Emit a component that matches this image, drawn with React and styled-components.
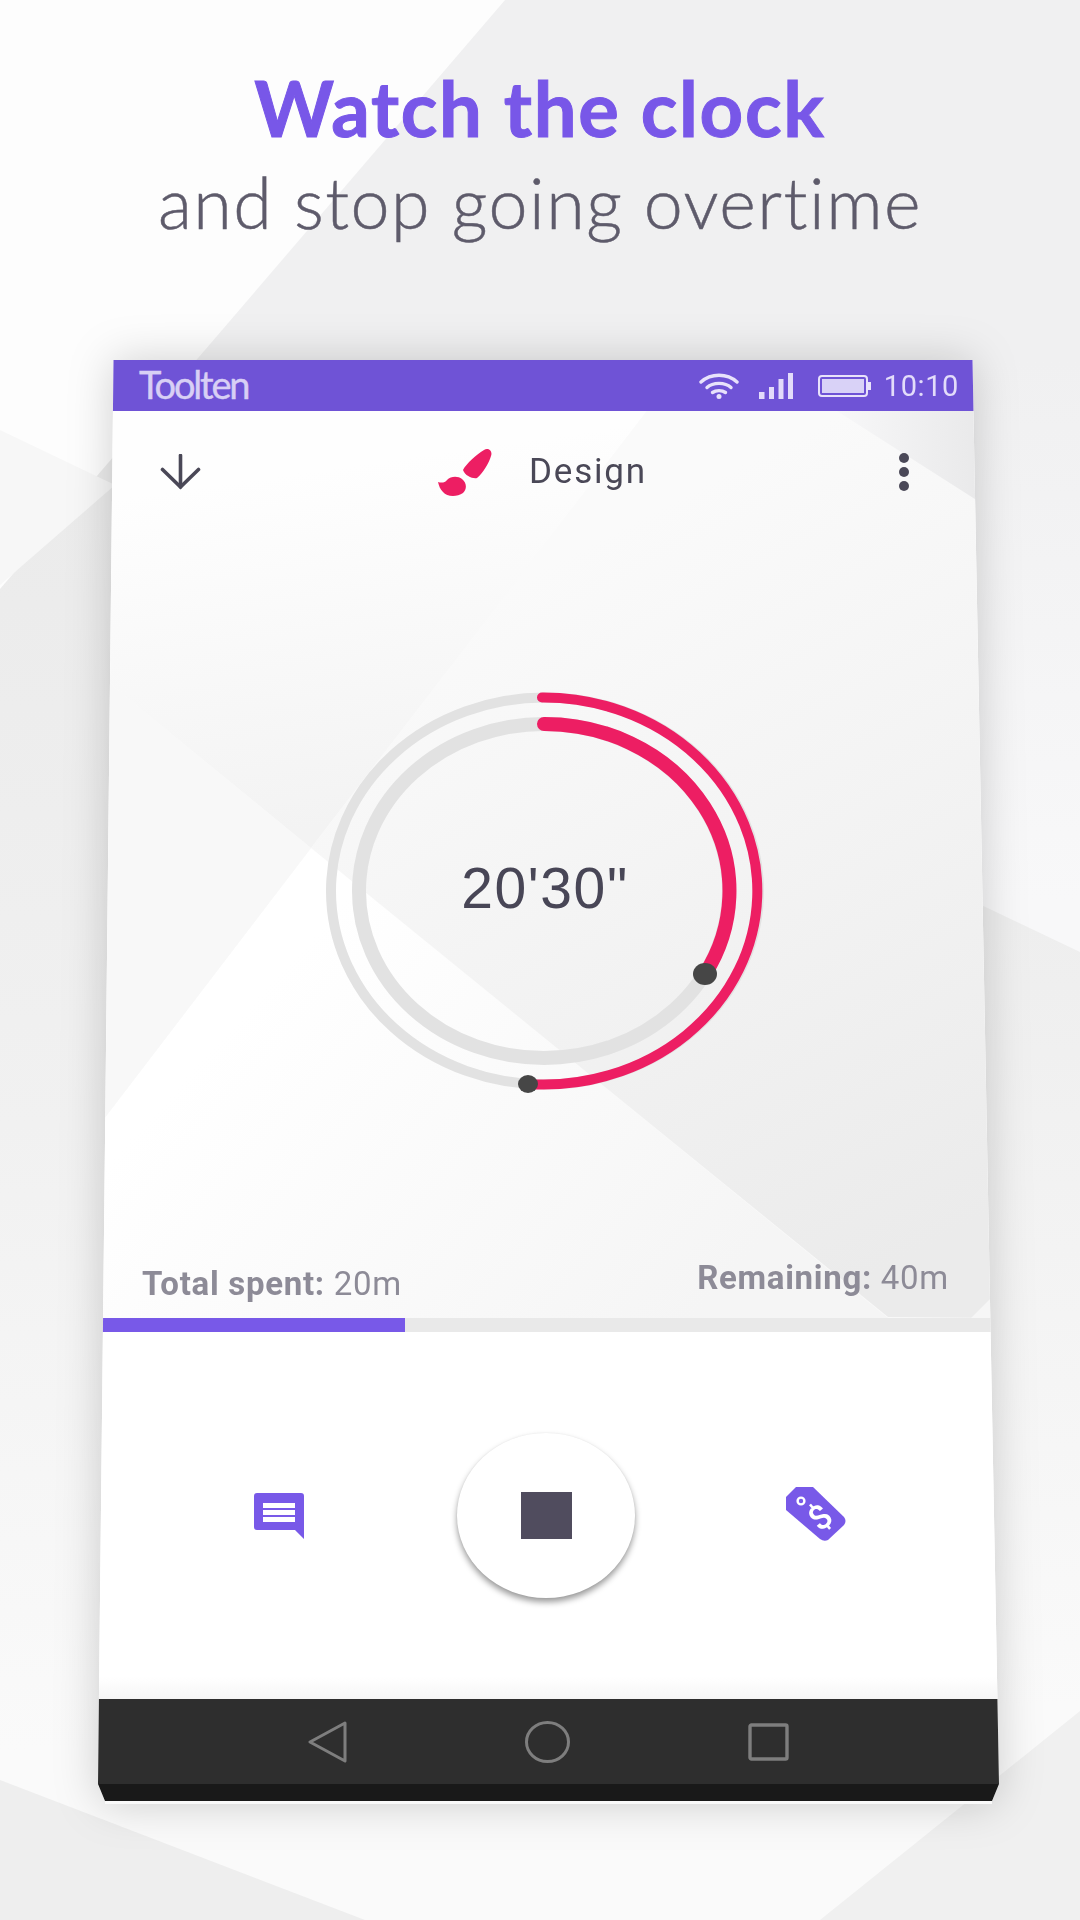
import React from 'react'
import styled, { createGlobalStyle } from 'styled-components'

const GlobalStyle = createGlobalStyle`
  html, body {
    margin: 0;
    padding: 0;
    background: #f0f0f1;
  }
`

const Page = styled.div`
  position: relative;
  width: 1080px;
  height: 1920px;
  overflow: hidden;
  font-family: Roboto, "Liberation Sans", sans-serif;
`
const Backdrop = styled.svg`
  position: absolute;
  top: 0;
  left: 0;
`
const Content = styled.div`
  position: relative;
  display: flex;
  flex-direction: column;
`
const Heading = styled.div`
  height: 360px;
  padding-top: 66px;
  box-sizing: border-box;
  text-align: center;
`
const Title = styled.div`
  font-family: Lato, "Open Sans", sans-serif;
  font-size: 76px;
  line-height: 84px;
  font-weight: 700;
  color: #7857e8;
  letter-spacing: 1.7px;
  -webkit-text-stroke: 1px #7857e8;
`
const Subtitle = styled.div`
  font-family: Lato, "Open Sans", sans-serif;
  font-size: 70px;
  line-height: 84px;
  margin-top: 10px;
  font-weight: 300;
  color: #5e5b6b;
  letter-spacing: 1.5px;
  -webkit-text-stroke: 0.5px #5e5b6b;
`
const PhoneShadow = styled.div`
  margin-left: 97px;
  width: 903px;
  filter: drop-shadow(0 0 22px rgba(0, 0, 0, 0.18));
`
const Phone = styled.div`
  display: flex;
  flex-direction: column;
  height: 1444px;
  background: #fff;
  clip-path: polygon(16.5px 0, 875.5px 0, 902px 1424px, 895px 1441px, 895px 1444px, 8px 1444px, 8px 1441px, 1px 1424px);
`
const StatusBar = styled.div`
  display: flex;
  align-items: center;
  flex: 0 0 51px;
  padding: 0 41px 0 42px;
  background: #6f53d6;
  color: #e3dcfa;
`
const Brand = styled.div`
  font-family: Lato, sans-serif;
  font-size: 38px;
  line-height: 40px;
  margin-top: -4px;
  color: #d8cff5;
  letter-spacing: -2.2px;
  -webkit-text-stroke: 0.4px #d8cff5;
`
const StatusRight = styled.div`
  display: flex;
  align-items: center;
  margin-left: auto;
`
const StatusIcon = styled.svg`
  display: block;
  margin-left: ${p => p.$gap}px;
`
const Clock = styled.div`
  margin-left: 13px;
  font-size: 29px;
  line-height: 32px;
  letter-spacing: 0.6px;
  color: #e3dcfa;
`
const Main = styled.div`
  position: relative;
  display: flex;
  flex-direction: column;
  flex: 0 0 907px;
  overflow: hidden;
`
const Facets = styled.svg`
  position: absolute;
  top: 0;
  left: 0;
`
const TopRow = styled.div`
  position: relative;
  display: flex;
  align-items: center;
  justify-content: space-between;
  padding: 37px 91px 0 63px;
`
const Glyph = styled.svg`
  display: block;
  flex: none;
  margin-top: ${p => p.$lift ? `-${p.$lift}px` : '0'};
`
const Category = styled.div`
  display: flex;
  align-items: center;
  gap: 37px;
  width: 224px;
  padding-right: 14px;
  box-sizing: border-box;
`
const CategoryName = styled.div`
  font-size: 35px;
  line-height: 38px;
  letter-spacing: 1.8px;
  color: #4a4857;
`
const Dots = styled.div`
  display: flex;
  flex-direction: column;
  gap: 4px;
`
const Dot = styled.div`
  width: 10px;
  height: 10px;
  border-radius: 50%;
  background: #4a4857;
`
const RingWrap = styled.div`
  position: relative;
  width: 450px;
  height: 410px;
  margin: 190px 0 0 223px;
`
const Time = styled.div`
  position: absolute;
  top: 0;
  left: 0;
  width: 100%;
  height: 100%;
  display: flex;
  align-items: center;
  justify-content: center;
  font-family: "Liberation Sans", Arial, sans-serif;
  font-size: 57px;
  letter-spacing: 1.6px;
  color: #484656;
  padding-bottom: 6px;
  box-sizing: border-box;
`
const Stats = styled.div`
  position: relative;
  display: flex;
  justify-content: space-between;
  align-items: flex-start;
  margin-top: auto;
  padding: 0 51px 16px 45px;
`
const Stat = styled.div`
  margin-top: ${p => p.$offset}px;
  font-size: 33px;
  line-height: 36px;
  color: #8d8b97;
  letter-spacing: 0.7px;
  & b {
    font-weight: 700;
  }
`
const Progress = styled.div`
  flex: 0 0 14px;
  background: #e9e9e9;
`
const ProgressFill = styled.div`
  height: 100%;
  width: ${p => p.$width}px;
  background: #7859e8;
`
const Controls = styled.div`
  display: flex;
  align-items: center;
  gap: 151px;
  flex: 0 0 367px;
  padding-left: 157px;
  box-sizing: border-box;
  background: linear-gradient(#fff 94%, #f6f6f6 100%);
`
const StopButton = styled.div`
  display: flex;
  align-items: center;
  justify-content: center;
  flex: none;
  width: 178px;
  height: 165px;
  border-radius: 50%;
  background: #fff;
  box-shadow: 0 4px 6px rgba(0, 0, 0, 0.4), 0 0 2px rgba(0, 0, 0, 0.05);
`
const StopSquare = styled.div`
  width: 51px;
  height: 47px;
  background: #504c5e;
`
const NavBar = styled.div`
  display: flex;
  align-items: center;
  gap: 178px;
  flex: 0 0 85px;
  padding-left: 211px;
  box-sizing: border-box;
  background: #2e2e2e;
`
const NavBase = styled.div`
  flex: 0 0 17px;
  background: #191919;
`
const Lip = styled.div`
  flex: 0 0 3px;
  background: #fafafa;
`

const WifiIcon = () => (
  <StatusIcon $gap={0} width="40" height="26" viewBox="0 0 40 26" fill="none" stroke="#e8e2fb" strokeWidth="3.4" strokeLinecap="round">
    <path d="M2 9 C12 0 28 0 38 9" />
    <path d="M8 14.5 C14 9 26 9 32 14.5" />
    <path d="M13.5 19.5 C17 17 23 17 26.5 19.5" />
    <circle cx="20" cy="23.4" r="2.5" fill="#e8e2fb" stroke="none" />
  </StatusIcon>
)

const SignalIcon = () => (
  <StatusIcon $gap={20} width="34" height="26" viewBox="0 0 34 26" fill="#e3dcfa">
    <rect x="0" y="19" width="5.5" height="7" />
    <rect x="10" y="14" width="5" height="12" />
    <rect x="19.5" y="6" width="5" height="20" />
    <rect x="29" y="0" width="5" height="26" />
  </StatusIcon>
)

const BatteryIcon = () => (
  <StatusIcon $gap={25} width="53" height="22" viewBox="0 0 53 22">
    <rect x="1" y="1" width="48" height="20" rx="3" fill="none" stroke="#e8e2fb" strokeWidth="2" />
    <rect x="4" y="4" width="42" height="14" fill="#d9d2f7" />
    <rect x="50" y="7" width="3" height="8" fill="#e8e2fb" />
  </StatusIcon>
)

const BrushIcon = () => (
  <Glyph width="54" height="48" viewBox="0 0 54 48" fill="#ed1e63">
    <path d="M46 2 C50 -1 55 3 53 8 C51 15 45 25 39 30 C35 31 27 28 25 22 C28 16 39 6 46 2 Z" />
    <path d="M0 34 C3 35 7 35 9 32 C13 28 20 28 24 31 C29 35 29 41 25 45 C19 49 9 49 5 44 C2 41 1 38 0 34 Z" />
  </Glyph>
)

const ChatIcon = () => (
  <Glyph width="52" height="46" viewBox="0 0 52 46">
    <path d="M3 0 H47 Q50 0 50 3 V46 L41 37 H3 Q0 37 0 34 V3 Q0 0 3 0 Z" fill="#7859e8" />
    <rect x="9" y="10" width="32" height="5" fill="#fff" />
    <rect x="9" y="17" width="32" height="5" fill="#fff" />
    <rect x="9" y="24" width="32" height="5" fill="#fff" />
  </Glyph>
)

const TagIcon = () => (
  <Glyph $lift={3} width="60" height="54" viewBox="0 0 60 54">
    <path d="M0 10 L10 0 H27 L58 30 Q61 34 58 38 L42 53 Q38 55 34 52 L0 23 Z" fill="#7859e8" />
    <circle cx="15" cy="14" r="3.4" fill="none" stroke="#fff" strokeWidth="2.4" />
    <text x="34" y="42" textAnchor="middle" fontFamily="Roboto, sans-serif" fontWeight="500" fontSize="34" fill="#fff" transform="rotate(-40 34 30)">$</text>
  </Glyph>
)

const App = () => {
  return (
    <Page>
      <GlobalStyle />
      <Backdrop width="1080" height="1920" viewBox="0 0 1080 1920">
        <defs>
          <linearGradient id="leftSide" gradientUnits="userSpaceOnUse" x1="0" y1="500" x2="0" y2="1750">
            <stop offset="0" stopColor="#ebebeb" />
            <stop offset="0.5" stopColor="#f1f1f1" />
            <stop offset="1" stopColor="#fafafa" />
          </linearGradient>
          <linearGradient id="rightTop" gradientUnits="userSpaceOnUse" x1="0" y1="360" x2="0" y2="900">
            <stop offset="0" stopColor="#f0f0f1" />
            <stop offset="1" stopColor="#f8f8f9" />
          </linearGradient>
          <linearGradient id="rightLow" gradientUnits="userSpaceOnUse" x1="0" y1="920" x2="0" y2="1711">
            <stop offset="0" stopColor="#eeeeee" />
            <stop offset="1" stopColor="#fafafa" />
          </linearGradient>
        </defs>
        <rect width="1080" height="1920" fill="#f0f0f1" />
        <rect x="0" y="0" width="113" height="1780" fill="url(#leftSide)" />
        <polygon points="0,0 505,0 0,589" fill="#fdfdfd" />
        <polygon points="0,430 115,485 0,585" fill="#f7f7f7" />
        <rect x="975" y="0" width="105" height="960" fill="url(#rightTop)" />
        <polygon points="975,902 1080,952 1080,1720 975,1720" fill="url(#rightLow)" />
        <polygon points="0,1750 1080,1700 1080,1920 0,1920" fill="#fafafa" />
        <polygon points="0,1780 365,1920 0,1920" fill="#eeeeee" />
        <polygon points="1080,1711 820,1920 1080,1920" fill="#f0f0f0" />
      </Backdrop>
      <Content>
        <Heading>
          <Title>Watch the clock</Title>
          <Subtitle>and stop going overtime</Subtitle>
        </Heading>
        <PhoneShadow>
          <Phone>
            <StatusBar>
              <Brand>Toolten</Brand>
              <StatusRight>
                <WifiIcon />
                <SignalIcon />
                <BatteryIcon />
                <Clock>10:10</Clock>
              </StatusRight>
            </StatusBar>
            <Main>
              <Facets width="903" height="907" viewBox="97 411 903 907">
                <defs>
                  <linearGradient id="faceA" gradientUnits="userSpaceOnUse" x1="250" y1="480" x2="300" y2="830">
                    <stop offset="0" stopColor="#fefefe" />
                    <stop offset="1" stopColor="#f3f3f3" />
                  </linearGradient>
                  <linearGradient id="faceB" gradientUnits="userSpaceOnUse" x1="560" y1="560" x2="920" y2="1250">
                    <stop offset="0" stopColor="#fafafa" />
                    <stop offset="1" stopColor="#ebebeb" />
                  </linearGradient>
                  <linearGradient id="faceC" gradientUnits="userSpaceOnUse" x1="300" y1="950" x2="700" y2="1310">
                    <stop offset="0" stopColor="#ffffff" />
                    <stop offset="1" stopColor="#f5f5f5" />
                  </linearGradient>
                  <linearGradient id="faceCorner" gradientUnits="userSpaceOnUse" x1="840" y1="0" x2="980" y2="0">
                    <stop offset="0" stopColor="#f7f7f8" />
                    <stop offset="1" stopColor="#e9e9ea" />
                  </linearGradient>
                </defs>
                <rect x="97" y="411" width="903" height="907" fill="#f9f9f9" />
                <polygon points="97,411 647,411 311,848 97,673" fill="url(#faceA)" />
                <polygon points="647,411 1000,411 1000,1318 888,1317 311,848" fill="url(#faceB)" />
                <polygon points="311,848 888,1318 97,1318 97,1128" fill="url(#faceC)" />
                <polygon points="97,673 311,848 97,1128" fill="#f8f8f8" />
                <polygon points="837,411 1000,411 1000,515" fill="url(#faceCorner)" />
                <polygon points="992,1297 971,1318 992,1318" fill="#f6f6f6" />
              </Facets>
              <TopRow>
                <Glyph width="41" height="36" viewBox="0 0 41 36" fill="none" stroke="#4a4857" strokeWidth="3.6" strokeLinecap="round">
                  <path d="M20.5 1.5 V33" />
                  <path d="M2.5 15.5 L20.5 33 L38.5 15.5" />
                </Glyph>
                <Category>
                  <BrushIcon />
                  <CategoryName>Design</CategoryName>
                </Category>
                <Dots>
                  <Dot />
                  <Dot />
                  <Dot />
                </Dots>
              </TopRow>
              <RingWrap>
                <Glyph width="450" height="410" viewBox="0 0 450 410" fill="none">
                  <ellipse cx="225" cy="205" rx="214" ry="193.5" stroke="#e2e2e2" strokeWidth="10" />
                  <ellipse cx="224" cy="205" rx="185" ry="167" stroke="#e2e2e2" strokeWidth="14" />
                  <path d="M222 11.5 A214 193.5 0 1 1 208 398" stroke="#ed1e63" strokeWidth="10" strokeLinecap="round" />
                  <path d="M224 38 A185 167 0 0 1 385 288" stroke="#ed1e63" strokeWidth="14" strokeLinecap="round" />
                  <ellipse cx="385" cy="288" rx="12" ry="11" fill="#464646" />
                  <ellipse cx="208" cy="398" rx="10" ry="9" fill="#464646" />
                </Glyph>
                <Time>20'30"</Time>
              </RingWrap>
              <Stats>
                <Stat $offset={6}><b>Total spent:</b> 20m</Stat>
                <Stat $offset={0}><b>Remaining:</b> 40m</Stat>
              </Stats>
            </Main>
            <Progress>
              <ProgressFill $width={308} />
            </Progress>
            <Controls>
              <ChatIcon />
              <StopButton>
                <StopSquare />
              </StopButton>
              <TagIcon />
            </Controls>
            <NavBar>
              <Glyph width="39" height="42" viewBox="0 0 39 42" fill="none" stroke="#7e7e7e" strokeWidth="3" strokeLinejoin="round">
                <path d="M37 2 L2 21 L37 40 Z" />
              </Glyph>
              <Glyph width="45" height="42" viewBox="0 0 45 42" fill="none" stroke="#7e7e7e" strokeWidth="3">
                <ellipse cx="22.5" cy="21" rx="21" ry="19.5" />
              </Glyph>
              <Glyph width="41" height="38" viewBox="0 0 41 38" fill="none" stroke="#7e7e7e" strokeWidth="3.4">
                <rect x="2" y="2" width="37" height="34" rx="1.5" />
              </Glyph>
            </NavBar>
            <NavBase />
            <Lip />
          </Phone>
        </PhoneShadow>
      </Content>
    </Page>
  )
}

export default App
